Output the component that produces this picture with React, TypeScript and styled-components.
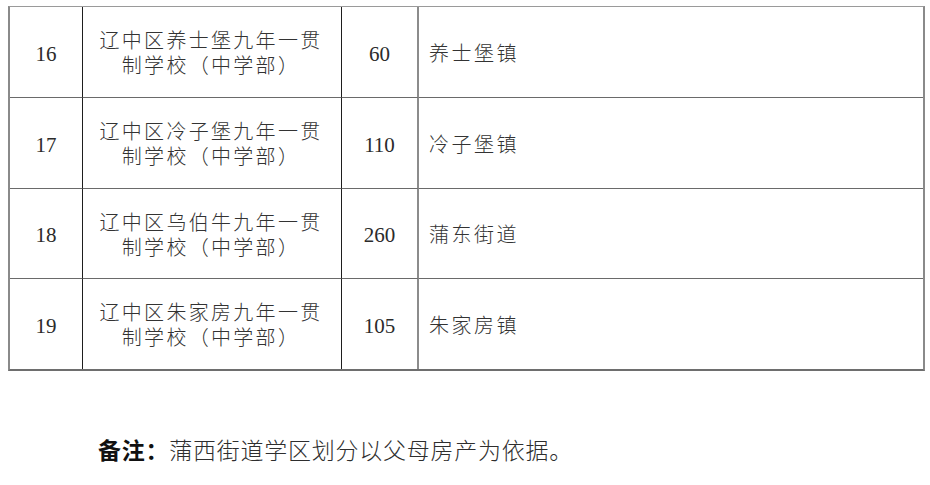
import React from "react";
import styled, { createGlobalStyle } from "styled-components";

const Global = createGlobalStyle`
  html, body { margin: 0; padding: 0; background: #ffffff; }
  body { font-family: "Noto Sans CJK SC", sans-serif; color: #2b2b2b; }
`;

const Page = styled.div`
  width: 930px;
  height: 485px;
  padding: 6px 0 0 8px;
  box-sizing: border-box;
  background: #fff;
`;

const Table = styled.div`
  width: 917px;
  display: grid;
  grid-template-columns: 73px 259px 77px 1fr;
  grid-template-rows: 91px 91px 90px 90px;
  border-top: 1px solid #9a9a9a;
  border-left: 2px solid #8a8a8a;
  border-right: 2px solid #8a8a8a;
  border-bottom: 2px solid #6e6e6e;
  box-sizing: border-box;
`;

const Cell = styled.div<{ $line?: "dark" | "grey" | "none"; $last?: boolean }>`
  display: flex;
  align-items: center;
  justify-content: center;
  box-sizing: border-box;
  border-right: ${(p) =>
    p.$line === "dark" ? "1px solid #1e1e1e" : p.$line === "grey" ? "2px solid #8c8c8c" : "none"};
  border-bottom: ${(p) => (p.$last ? "none" : "1px solid #6a6a6a")};
`;

const Num = styled.span`
  font-family: "Liberation Serif", serif;
  font-size: 21px;
  color: #2b2b2b;
  padding-top: 4px;
`;

const School = styled.div`
  display: flex;
  flex-direction: column;
  align-items: center;
  margin-left: -2px;
`;

const SchoolLine = styled.span`
  font-family: "Noto Sans CJK SC", sans-serif;
  font-weight: 300;
  font-size: 20px;
  letter-spacing: 2.3px;
  line-height: 25px;
  height: 25px;
  white-space: nowrap;
  color: #333;
`;

const TownCell = styled(Cell)`
  justify-content: flex-start;
  padding-left: 10px;
`;

const Town = styled.span`
  font-family: "Noto Sans CJK SC", sans-serif;
  font-weight: 300;
  font-size: 20px;
  letter-spacing: 2.5px;
  color: #333;
`;

const Note = styled.p`
  margin: 61px 0 0 90px;
  font-family: "Noto Sans CJK SC", sans-serif;
  font-weight: 300;
  font-size: 23px;
  letter-spacing: 0.75px;
  color: #2e2e2e;
`;

const Strong = styled.span`
  font-weight: 700;
  color: #111;
`;

const rows = [
  { n: "16", name: "养士堡", cap: "60", town: "养士堡镇" },
  { n: "17", name: "冷子堡", cap: "110", town: "冷子堡镇" },
  { n: "18", name: "乌伯牛", cap: "260", town: "蒲东街道" },
  { n: "19", name: "朱家房", cap: "105", town: "朱家房镇" },
];

export default function App() {
  return (
    <>
      <Global />
      <Page>
        <Table>
          {rows.map((r, i) => {
            const last = i === rows.length - 1;
            return (
              <React.Fragment key={r.n}>
                <Cell $line="dark" $last={last}>
                  <Num>{r.n}</Num>
                </Cell>
                <Cell $line="dark" $last={last}>
                  <School>
                    <SchoolLine>辽中区{r.name}九年一贯</SchoolLine>
                    <SchoolLine>制学校（中学部）</SchoolLine>
                  </School>
                </Cell>
                <Cell $line="grey" $last={last}>
                  <Num>{r.cap}</Num>
                </Cell>
                <TownCell $line="none" $last={last}>
                  <Town>{r.town}</Town>
                </TownCell>
              </React.Fragment>
            );
          })}
        </Table>
        <Note>
          <Strong>备注：</Strong>蒲西街道学区划分以父母房产为依据。
        </Note>
      </Page>
    </>
  );
}
